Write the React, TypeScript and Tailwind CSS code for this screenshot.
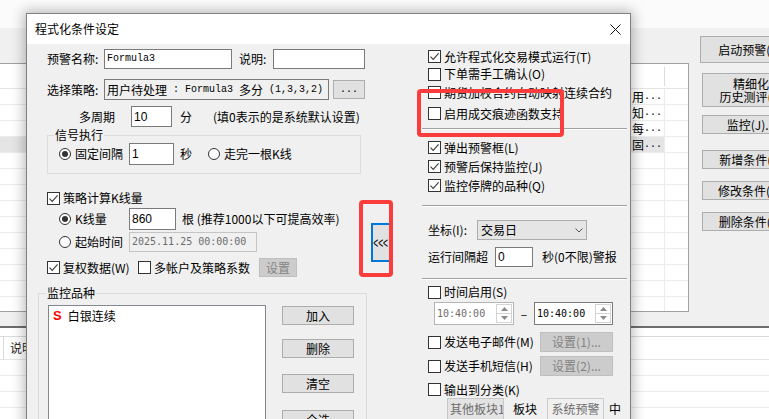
import React from 'react';

// font helpers for the half-width latin text used inside edit boxes
const serifMono = "whitespace-pre font-['Liberation_Mono',monospace] text-[10px]";
const sansMono = "whitespace-pre font-['DejaVu_Sans_Mono',monospace] text-[10px]";
const num = "font-['Liberation_Sans',sans-serif] text-[12px]";

type BoxProps = { className?: string; children?: React.ReactNode; disabled?: boolean };

function CheckBox({ checked = false }: { checked?: boolean }) {
  return (
    <span className="flex h-[13px] w-[13px] shrink-0 items-center justify-center border border-[#333333] bg-white">
      {checked && (
        <svg width="11" height="11" viewBox="0 0 11 11">
          <path d="M1.5 5.6 4.2 8.4 9.6 2.4" fill="none" stroke="#3c3c3c" strokeWidth="1.1" />
        </svg>
      )}
    </span>
  );
}

function Radio({ checked = false }: { checked?: boolean }) {
  return (
    <span className="flex h-[12px] w-[12px] shrink-0 items-center justify-center rounded-full border border-[#333333] bg-white">
      {checked && <span className="h-[6px] w-[6px] rounded-full bg-[#333333]" />}
    </span>
  );
}

function Option({ checked = false, label, className = '' }: { checked?: boolean; label: string; className?: string }) {
  return (
    <div className={`flex shrink-0 items-center ${className}`}>
      <CheckBox checked={checked} />
      <span className="ml-[3px] whitespace-nowrap">{label}</span>
    </div>
  );
}

function Edit({ className = '', children, disabled = false }: BoxProps) {
  return (
    <div
      className={`flex shrink-0 items-center overflow-hidden whitespace-nowrap border pl-[2px] ${
        disabled ? 'border-[#c4c4c4] bg-[#f0f0f0] text-[#6d6d6d]' : 'border-[#7a7a7a] bg-white'
      } ${className}`}
    >
      {children}
    </div>
  );
}

function Btn({ className = '', children, disabled = false }: BoxProps) {
  return (
    <div
      className={`flex shrink-0 items-center justify-center whitespace-nowrap border ${
        disabled ? 'border-[#bfbfbf] bg-[#cccccc] text-[#838383]' : 'border-[#adadad] bg-[#e1e1e1]'
      } ${className}`}
    >
      {children}
    </div>
  );
}

function Sep({ className = '' }: { className?: string }) {
  return <div className={`h-[2px] shrink-0 border-t border-b border-t-[#a0a0a0] border-b-white ${className}`} />;
}

function Spinner() {
  return (
    <div className="ml-auto mr-[1px] flex h-[19px] w-[16px] flex-col border border-[#d4d4d4]">
      <div className="flex flex-1 items-center justify-center border-b border-[#d4d4d4]">
        <svg width="7" height="4" viewBox="0 0 7 4">
          <path d="M0 4 3.5 0 7 4Z" fill="#8a8a8a" />
        </svg>
      </div>
      <div className="flex flex-1 items-center justify-center">
        <svg width="7" height="4" viewBox="0 0 7 4">
          <path d="M0 0 3.5 4 7 0Z" fill="#8a8a8a" />
        </svg>
      </div>
    </div>
  );
}

function TimeBox({ className = '', disabled = false }: BoxProps) {
  return (
    <div
      className={`flex h-[23px] shrink-0 items-center border bg-white pl-[2px] ${
        disabled ? 'border-[#b5b5b5] text-[#6d6d6d]' : 'border-[#7a7a7a]'
      } ${className}`}
    >
      <span className={sansMono}>10:40:00</span>
      <Spinner />
    </div>
  );
}

// list behind the dialog: only the tail of each name shows past the dialog edge
const tails = ['用', '知', '每', '固', '', '', '', '', '', '', '', '', '', ''];

function MainWindow() {
  return (
    <div className="flex h-full flex-col">
      <div className="h-[28px] shrink-0 bg-[#fbfbfb]" />
      <div className="flex h-[284px] shrink-0">
        <div className="w-[689px] shrink-0 pt-[35px]">
          <div className="flex h-[249px] flex-col overflow-hidden border border-l-0 border-[#a0a0a0] bg-white">
            <div className="flex h-[25px] shrink-0 items-center border-b border-[#e5e5e5]">
              <div className="w-[664px] shrink-0" />
              <div className="h-[19px] w-px bg-[#dcdcdc]" />
            </div>
            {tails.map((t, i) => (
              <div key={i} className="flex h-[16px] shrink-0 border-b border-[#ececec]">
                <div
                  className={`flex w-[665px] shrink-0 items-center justify-end border-r border-[#ececec] pr-[2px] ${
                    i === 3 ? 'bg-[#e5e5e5]' : ''
                  }`}
                >
                  {t && (
                    <>
                      <span>{t}</span>
                      <span className={serifMono}>...</span>
                    </>
                  )}
                </div>
                <div className="flex-1" />
              </div>
            ))}
          </div>
        </div>
        <div className="ml-[11px] flex w-[100px] shrink-0 flex-col">
          <Btn className="mt-[8px] h-[27px]">启动预警(S)</Btn>
          <Btn className="ml-[2px] mt-[10px] h-[34px] flex-col">
            <span className="leading-[13px]">精细化</span>
            <span className="leading-[13px]">历史测评(V)</span>
          </Btn>
          <Btn className="ml-[2px] mt-[8px] h-[19px]">监控(J)...</Btn>
          <Btn className="ml-[2px] mt-[16px] h-[19px]">新增条件(A)</Btn>
          <Btn className="ml-[2px] mt-[12px] h-[19px]">修改条件(M)</Btn>
          <Btn className="ml-[2px] mt-[12px] h-[19px]">删除条件(D)</Btn>
        </div>
      </div>
      <div className="h-[14px] shrink-0" />
      <div className="h-[2px] shrink-0 bg-[#6d6d6d]" />
      <div className="flex-1 bg-white">
        <div className="h-[9px] border-b border-[#dadada]" />
        <div className="flex h-[23px] items-center border-b border-[#e5e5e5]">
          <div className="h-full w-[4px] border-r border-[#dadada]" />
          <span className="ml-[6px] text-[#1c1c1c]">说明</span>
        </div>
        <div className="h-[16px] border-b border-[#ececec]" />
        <div className="h-[16px] border-b border-[#ececec]" />
        <div className="h-[16px] border-b border-[#ececec]" />
        <div className="h-[16px] border-b border-[#ececec]" />
      </div>
    </div>
  );
}

function LeftPane() {
  return (
    <div className="ml-[11px] flex w-[329px] shrink-0 flex-col">
      <div className="mt-[5px] flex h-[20px] items-center pl-[9px]">
        <span className="w-[57px] shrink-0">预警名称:</span>
        <Edit className="h-[20px] w-[128px]">
          <span className={serifMono}>Formula3</span>
        </Edit>
        <span className="ml-[7px] w-[34px] shrink-0">说明:</span>
        <Edit className="h-[20px] w-[92px]" />
      </div>

      <div className="mt-[10px] flex h-[21px] items-center pl-[9px]">
        <span className="w-[57px] shrink-0">选择策略:</span>
        <div className="flex h-[21px] w-[225px] shrink-0 items-center overflow-hidden whitespace-nowrap border border-[#7a7a7a] bg-[#f0f0f0] pl-[2px]">
          <span>用户待处理</span>
          <span className={serifMono}> : Formula3 </span>
          <span>多分</span>
          <span className={serifMono}> (1,3,3,2)</span>
        </div>
        <Btn className="ml-[4px] h-[19px] w-[32px]">
          <span className={serifMono}>...</span>
        </Btn>
      </div>

      <div className="mt-[6px] flex h-[21px] items-center pl-[41px]">
        <span className="w-[52px] shrink-0">多周期</span>
        <Edit className="h-[21px] w-[41px]">
          <span className={num}>10</span>
        </Edit>
        <span className="ml-[8px]">分</span>
        <span className="ml-[21px] whitespace-nowrap">(填0表示的是系统默认设置)</span>
      </div>

      <div className="relative ml-[9px] mt-[8px] h-[39px] w-[314px] border border-[#dcdcdc]">
        <span className="absolute -top-[8px] left-[6px] bg-[#f0f0f0] px-[1px] leading-[14px]">信号执行</span>
        <div className="mt-[7px] flex h-[22px] items-center pl-[11px]">
          <Radio checked />
          <span className="ml-[4px]">固定间隔</span>
          <Edit className="ml-[6px] h-[22px] w-[45px]">
            <span className={num}>1</span>
          </Edit>
          <span className="ml-[6px]">秒</span>
          <span className="ml-[16px]">
            <Radio />
          </span>
          <span className="ml-[4px] whitespace-nowrap">走完一根K线</span>
        </div>
      </div>

      <Option checked label="策略计算K线量" className="mt-[16px] h-[16px] pl-[9px]" />

      <div className="mt-[2px] flex h-[22px] items-center pl-[21px]">
        <div className="flex w-[70px] shrink-0 items-center">
          <Radio checked />
          <span className="ml-[4px]">K线量</span>
        </div>
        <Edit className="h-[22px] w-[47px]">
          <span className={num}>860</span>
        </Edit>
        <span className="ml-[6px] whitespace-nowrap">根 (推荐1000以下可提高效率)</span>
      </div>

      <div className="mt-[2px] flex h-[20px] items-center pl-[21px]">
        <div className="flex w-[70px] shrink-0 items-center">
          <Radio />
          <span className="ml-[4px]">起始时间</span>
        </div>
        <Edit disabled className="h-[20px] w-[128px]">
          <span className={sansMono}>2025.11.25 00:00:00</span>
        </Edit>
      </div>

      <div className="mt-[6px] flex h-[19px] items-center pl-[9px]">
        <Option checked label="复权数据(W)" className="w-[91px]" />
        <Option label="多帐户及策略系数" className="w-[121px]" />
        <Btn disabled className="h-[19px] w-[38px]">
          设置
        </Btn>
      </div>

      <div className="relative mt-[16px] h-[140px] w-[329px] border border-[#dcdcdc]">
        <span className="absolute -top-[8px] left-[7px] bg-[#f0f0f0] px-[1px] leading-[14px]">监控品种</span>
        <div className="flex pl-[9px] pt-[11px]">
          <div className="h-[120px] w-[218px] shrink-0 border border-[#828790] bg-white pl-[4px] pt-[2px]">
            <div className="flex h-[16px] items-center">
              <span className="font-['Liberation_Sans',sans-serif] text-[13px] font-bold text-[#ff0000]">S</span>
              <span className="ml-[6px]">白银连续</span>
            </div>
          </div>
          <div className="ml-[16px] flex flex-col">
            <Btn className="mt-[1px] h-[19px] w-[72px]">加入</Btn>
            <Btn className="mt-[14px] h-[19px] w-[72px]">删除</Btn>
            <Btn className="mt-[16px] h-[19px] w-[72px]">清空</Btn>
            <Btn className="mt-[17px] h-[19px] w-[72px]">全选</Btn>
          </div>
        </div>
      </div>
    </div>
  );
}

function RightPane() {
  return (
    <div className="ml-[31px] flex w-[205px] shrink-0 flex-col">
      <Option checked label="允许程式化交易模式运行(T)" className="mt-[4px] h-[17px] pl-[6px]" />
      <Option label="下单需手工确认(O)" className="h-[18px] pl-[6px]" />
      <Option label="期货加权合约自动映射连续合约" className="h-[19px] pl-[6px]" />
      <Option label="启用成交痕迹函数支持" className="h-[23px] pl-[6px]" />
      <Sep className="mt-[3px]" />

      <Option checked label="弹出预警框(L)" className="mt-[8px] h-[19px] pl-[6px]" />
      <Option checked label="预警后保持监控(J)" className="h-[19px] pl-[6px]" />
      <Option checked label="监控停牌的品种(Q)" className="h-[19px] pl-[6px]" />
      <Sep className="mt-[10px]" />

      <div className="mt-[13px] flex h-[20px] items-center pl-[6px]">
        <span className="w-[49px] shrink-0 whitespace-nowrap">坐标(I):</span>
        <div className="flex h-[20px] w-[110px] shrink-0 items-center border border-[#acacac] bg-[#e5e5e5] pl-[3px]">
          <span>交易日</span>
          <svg className="ml-auto mr-[3px]" width="8" height="5" viewBox="0 0 8 5">
            <path d="M0.5 0.5 4 4 7.5 0.5" fill="none" stroke="#555555" />
          </svg>
        </div>
      </div>

      <div className="mt-[7px] flex h-[20px] items-center pl-[6px]">
        <span className="w-[67px] shrink-0">运行间隔超</span>
        <Edit className="h-[20px] w-[38px]">
          <span className={num}>0</span>
        </Edit>
        <span className="ml-[9px] whitespace-nowrap">秒(0不限)警报</span>
      </div>
      <Sep className="mt-[11px]" />

      <Option label="时间启用(S)" className="mt-[5px] h-[14px] pl-[6px]" />
      <div className="mt-[3px] flex h-[23px] items-center pl-[12px]">
        <TimeBox disabled className="w-[80px]" />
        <span className="w-[20px] text-center">–</span>
        <TimeBox className="w-[79px]" />
      </div>

      <div className="mt-[7px] flex h-[20px] items-center pl-[6px]">
        <Option label="发送电子邮件(M)" className="w-[112px]" />
        <Btn disabled className="h-[20px] w-[73px]">
          设置(1)...
        </Btn>
      </div>
      <div className="mt-[4px] flex h-[20px] items-center pl-[6px]">
        <Option label="发送手机短信(H)" className="w-[112px]" />
        <Btn disabled className="h-[20px] w-[73px]">
          设置(2)...
        </Btn>
      </div>
      <Option label="输出到分类(K)" className="mt-[5px] h-[17px] pl-[6px]" />

      <div className="flex h-[22px] items-center pl-[25px]">
        <div className="flex h-[22px] w-[57px] shrink-0 items-center overflow-hidden whitespace-nowrap border border-[#c8c8c8] bg-[#e3e3e3] pl-[2px] text-[#6d6d6d]">
          其他板块1
        </div>
        <span className="ml-[9px] whitespace-nowrap">板块</span>
        <div className="ml-[10px] flex h-[22px] w-[57px] shrink-0 items-center justify-center whitespace-nowrap border border-[#cccccc] bg-[#f0f0f0] text-[#6d6d6d]">
          系统预警
        </div>
        <span className="ml-[5px]">中</span>
      </div>
    </div>
  );
}

function Dialog() {
  return (
    <div className="absolute left-[26px] top-[13px] flex h-[420px] w-[605px] flex-col border border-[#808080] bg-[#f0f0f0] shadow-[0_0_12px_2px_rgba(0,0,0,0.28)]">
      <div className="flex h-[30px] shrink-0 items-center bg-white pl-[8px]">
        <span>程式化条件设定</span>
        <svg className="ml-auto mr-[9px]" width="11" height="11" viewBox="0 0 11 11">
          <path d="M0.5 0.5 10.5 10.5M10.5 0.5 0.5 10.5" stroke="#111111" strokeWidth="1" />
        </svg>
      </div>
      <div className="flex items-start">
        <LeftPane />
        <div className="ml-[4px] w-[20px] shrink-0 pt-[179px]">
          {/* collapse arrow button; the narrow tall glyphs come from a horizontal squeeze */}
          <div className="flex h-[39px] items-center justify-center overflow-hidden border-2 border-[#0078d7] bg-[#e1e1e1]">
            <span className="inline-block scale-x-[0.6] whitespace-nowrap pr-[2px] font-['Liberation_Sans',sans-serif] text-[14px] leading-[14px]">
              &lt;&lt;&lt;
            </span>
          </div>
        </div>
        <RightPane />
      </div>
    </div>
  );
}

export default function App() {
  return (
    <div className="relative h-[419px] w-[769px] overflow-hidden bg-[#f0f0f0] font-['Noto_Sans_CJK_SC','Microsoft_YaHei',sans-serif] text-[12px] leading-[16px] text-black">
      <MainWindow />
      <Dialog />
      {/* red call-out frames */}
      <div className="pointer-events-none absolute left-[359px] top-[200px] h-[77px] w-[34px] rounded-[4px] border-4 border-[#fa3c3c]" />
      <div className="pointer-events-none absolute left-[417px] top-[89px] h-[48px] w-[147px] rounded-[4px] border-4 border-[#fa3c3c]" />
    </div>
  );
}
